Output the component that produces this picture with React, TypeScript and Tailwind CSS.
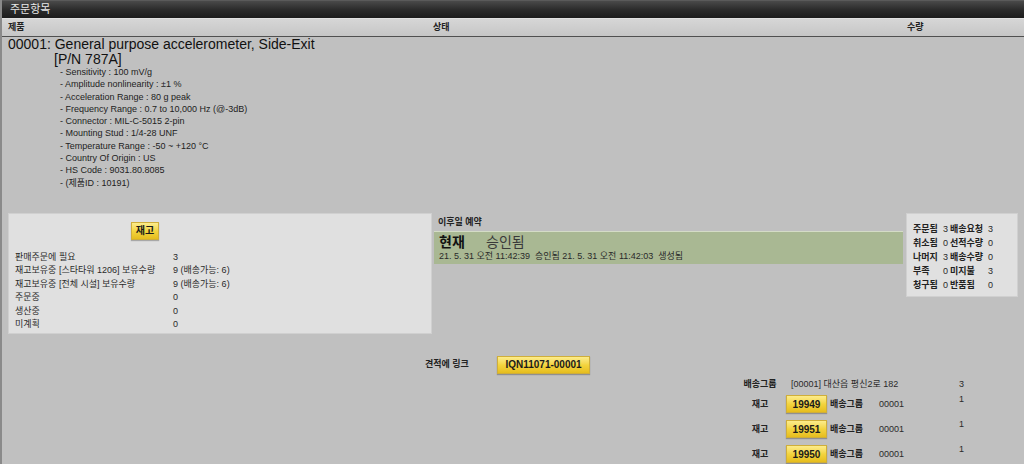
import React from 'react';

const font = { fontFamily: '"Liberation Sans", "Noto Sans CJK KR", sans-serif' };

const specs = [
  '- Sensitivity : 100 mV/g',
  '- Amplitude nonlinearity : ±1 %',
  '- Acceleration Range : 80 g peak',
  '- Frequency Range : 0.7 to 10,000 Hz (@-3dB)',
  '- Connector : MIL-C-5015 2-pin',
  '- Mounting Stud : 1/4-28 UNF',
  '- Temperature Range : -50 ~ +120 °C',
  '- Country Of Origin : US',
  '- HS Code : 9031.80.8085',
  '- (제품ID : 10191)',
];

const stock = [
  ['판매주문에 필요', '3'],
  ['재고보유중 [스타타워 1206] 보유수량', '9 (배송가능: 6)'],
  ['재고보유중 [전체 시설] 보유수량', '9 (배송가능: 6)'],
  ['주문중', '0'],
  ['생산중', '0'],
  ['미계획', '0'],
];

const counts = [
  ['주문됨', '3', '배송요청', '3'],
  ['취소됨', '0', '선적수량', '0'],
  ['나머지', '3', '배송수량', '0'],
  ['부족', '0', '미지불', '3'],
  ['청구됨', '0', '반품됨', '0'],
];

const YellowButton: React.FC<{ label: string; className?: string }> = ({ label, className }) => (
  <div
    className={`flex items-center justify-center h-[18px] bg-gradient-to-b from-[#fcec8a] via-[#f3d43e] to-[#e6bd1c] border border-[#cfae3a] shadow-[0_1px_1px_rgba(0,0,0,0.25)] font-bold text-[10px] text-[#1a1a1a] ${className ?? ''}`}
  >
    {label}
  </div>
);

const App: React.FC = () => {
  return (
    <div style={font} className="w-[1024px] h-[464px] overflow-hidden bg-[#c0c0c0] border-l-2 border-[#8a8a8a] text-[#222]">
      {/* title bar */}
      <div className="h-[18px] bg-gradient-to-b from-[#4a4a4a] via-[#2c2c2c] to-[#1c1c1c] border-t border-[#5a5a5a] flex items-center pl-[8px] text-[11px] text-[#e8e8e8]">
        주문항목
      </div>

      {/* header row */}
      <div className="h-[19px] bg-gradient-to-b from-[#d6d6d6] to-[#c6c6c6] border-t border-[#e0e0e0] border-b border-b-[#505050] flex items-center text-[9px] font-bold text-[#222]">
        <div className="w-[431px] pl-[6px]">제품</div>
        <div className="w-[474px]">상태</div>
        <div>수량</div>
      </div>

      {/* product */}
      <div className="pl-[6px]">
        <div className="text-[14px] leading-[15px] text-[#111]">00001: General purpose accelerometer, Side-Exit</div>
        <div className="text-[14px] leading-[15px] text-[#111] pl-[46px]">[P/N 787A]</div>
        <div className="pl-[52px] text-[9px] leading-[12.3px] text-[#222] -mt-[1px]">
          {specs.map((s) => (
            <div key={s}>{s}</div>
          ))}
        </div>
      </div>

      {/* status section */}
      <div className="flex mt-[24px] pl-[6px]">
        <div className="w-[424px] h-[121px] bg-[#e0e0e0] border border-[#d0d0d0] pt-[8px] pl-[6px]">
          <YellowButton label="재고" className="w-[28px] ml-[116px]" />
          <div className="mt-[11px] text-[9px] leading-[13.5px] text-[#2a2a2a]">
            {stock.map(([k, v]) => (
              <div key={k} className="flex">
                <div className="w-[158px]">{k}</div>
                <div>{v}</div>
              </div>
            ))}
          </div>
        </div>

        <div className="w-[469px] ml-[2px]">
          <div className="text-[9px] font-bold leading-[12px] pl-[4px] pt-[3px] text-[#222]">이후일 예약</div>
          <div className="mt-[3px] h-[33px] bg-[#a9b893] border-t border-[#d4dcc6] pl-[5px] pt-[1px]">
            <div className="flex items-baseline leading-[18px]">
              <span className="text-[14px] font-bold text-[#111] w-[47px]">현재</span>
              <span className="text-[14px] text-[#3a3a3a]">승인됨</span>
            </div>
            <div className="text-[9px] leading-[11px] text-[#2a2a2a] whitespace-pre">
              21. 5. 31 오전 11:42:39  승인됨 21. 5. 31 오전 11:42:03  생성됨
            </div>
          </div>
        </div>

        <div className="w-[112px] h-[84px] ml-[3px] bg-[#e0e0e0] border border-[#d0d0d0] pt-[8px] pl-[6px] text-[9px] leading-[14px] text-[#2a2a2a]">
          {counts.map(([a, b, c, d]) => (
            <div key={a} className="flex">
              <span className="w-[30px] font-bold text-[#222]">{a}</span>
              <span className="w-[7px]">{b}</span>
              <span className="w-[38px] font-bold text-[#222]">{c}</span>
              <span>{d}</span>
            </div>
          ))}
        </div>
      </div>

      {/* quote link */}
      <div className="flex items-center mt-[22px] pl-[423px]">
        <span className="text-[9px] font-bold w-[72px] text-[#222]">견적에 링크</span>
        <YellowButton label="IQN11071-00001" className="w-[93px]" />
      </div>

      {/* shipping groups */}
      <div className="mt-[4px] text-[9px] text-[#2a2a2a]">
        <div className="flex items-center h-[14px] pl-[733px]">
          <div className="w-[50px] text-center font-bold text-[#222]">배송그룹</div>
          <div className="w-[174px] pl-[6px]">[00001] 대산읍 평신2로 182</div>
          <div>3</div>
        </div>
        {['19949', '19951', '19950'].map((n) => (
          <div key={n} className="flex h-[25px] pl-[733px]">
            <div className="w-[50px] text-center font-bold text-[#222] self-center">재고</div>
            <div className="w-[174px] flex items-center">
              <YellowButton label={n} className="w-[41px] ml-[1px]" />
              <span className="font-bold text-[#222] ml-[3px] w-[49px]">배송그룹</span>
              <span>00001</span>
            </div>
            <div className="pt-[1px]">1</div>
          </div>
        ))}
      </div>
    </div>
  );
};

export default App;
